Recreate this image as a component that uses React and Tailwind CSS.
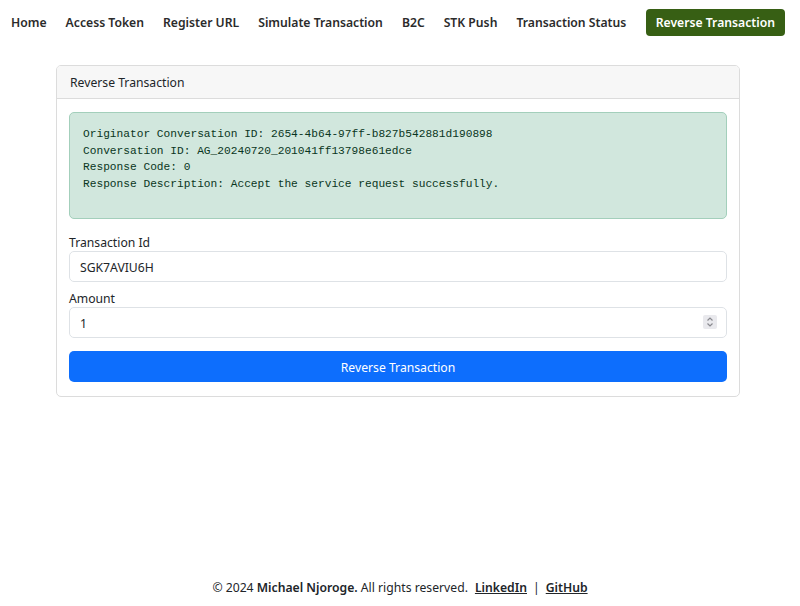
import React, { useState } from 'react';

const navLinks = ['Home', 'Access Token', 'Register URL', 'Simulate Transaction', 'B2C', 'STK Push', 'Transaction Status'];

const App = () => {
  const [transactionId, setTransactionId] = useState('SGK7AVIU6H');
  const [amount, setAmount] = useState('1');

  return (
    <div className="min-h-[606px] flex flex-col bg-white text-[#212529]" style={{ fontFamily: '"Noto Sans", "Open Sans", sans-serif' }}>
      {/* Top navigation */}
      <nav className="flex items-center h-[45px] pl-[11px] pr-[15px]">
        <div className="flex items-center gap-[19px] pt-[2px] text-[12.2px] font-semibold text-[#2b2b2b]">
          {navLinks.map((link) => (
            <a key={link} href="#" className="whitespace-nowrap">{link}</a>
          ))}
        </div>
        <a href="#" className="ml-auto h-[27px] px-[10px] pt-[1px] flex items-center rounded-[4px] bg-[#375f14] text-white text-[12.2px] font-semibold whitespace-nowrap">
          Reverse Transaction
        </a>
      </nav>

      <main className="flex-1 pt-[20px]">
        <div className="ml-[56px] w-[684px] border border-[#dcdcdc] rounded-[5px] overflow-hidden">
          <div className="h-[33px] flex items-center px-[13px] pt-[2px] bg-[#f7f7f7] border-b border-[#dcdcdc] text-[12.2px]">
            Reverse Transaction
          </div>
          <div className="px-[12px] pt-[13px] pb-[14px]">
            <div className="bg-[#d1e7dd] border border-[#a3cfbb] rounded-[5px] h-[107px] px-[13px] pt-[13px]">
              <pre className="text-[11.2px] leading-[16.6px] text-[#0a3622]" style={{ fontFamily: '"Liberation Mono", monospace' }}>
{`Originator Conversation ID: 2654-4b64-97ff-b827b542881d190898
Conversation ID: AG_20240720_201041ff13798e61edce
Response Code: 0
Response Description: Accept the service request successfully.`}
              </pre>
            </div>

            <div className="mt-[12px]">
              <label className="block h-[20px] pt-[2px] text-[12.2px] leading-[20px]">Transaction Id</label>
              <input
                type="text"
                value={transactionId}
                onChange={(e) => setTransactionId(e.target.value)}
                className="block w-full h-[31px] px-[10px] pt-[1px] text-[12.2px] border border-[#dee2e6] rounded-[5px] focus:outline-none"
              />
            </div>

            <div className="mt-[5px]">
              <label className="block h-[20px] pt-[2px] text-[12.2px] leading-[20px]">Amount</label>
              <div className="relative">
                <input
                  type="text"
                  inputMode="numeric"
                  value={amount}
                  onChange={(e) => setAmount(e.target.value)}
                  className="block w-full h-[31px] px-[10px] pt-[1px] text-[12.2px] border border-[#dee2e6] rounded-[5px] focus:outline-none"
                />
                {/* number spinner */}
                <span className="absolute right-[10px] top-[8px] w-[14px] h-[14px] bg-[#e9e9ed] rounded-[2px] flex items-center justify-center">
                  <svg width="8" height="12" viewBox="0 0 8 12" fill="none" stroke="#8a8a8f" strokeWidth="1.2">
                    <path d="M1.5 4.5 L4 2 L6.5 4.5" />
                    <path d="M1.5 7.5 L4 10 L6.5 7.5" />
                  </svg>
                </span>
              </div>
            </div>

            <button className="mt-[13px] w-full h-[31px] pt-[3px] rounded-[5px] bg-[#0d6efd] text-white text-[12.2px]">
              Reverse Transaction
            </button>
          </div>
        </div>
      </main>

      <footer className="h-[38px] pt-[2px] flex items-center justify-center text-[12.2px] text-[#212529]">
        <span>© 2024 <strong className="font-semibold">Michael Njoroge.</strong> All rights reserved.</span>
        <a href="#" className="ml-[7px] font-semibold underline">LinkedIn</a>
        <span className="mx-[6px]">|</span>
        <a href="#" className="font-semibold underline">GitHub</a>
      </footer>
    </div>
  );
};

export default App;
